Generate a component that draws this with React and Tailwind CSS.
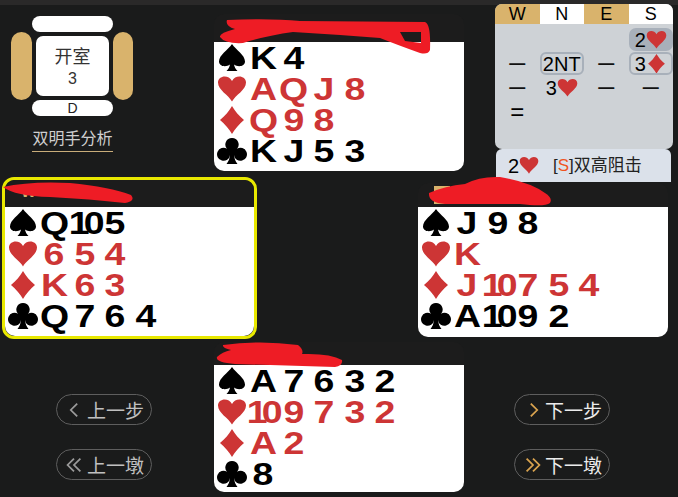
const RED = 'text-[#cd3535]'

const SUIT_PATHS = {
  '♠': 'M15 0C19 6 28 11 28 17.5C28 22.5 21 23.5 17 20.5C17.5 23 18.5 25 20.5 27L9.5 27C11.5 25 12.5 23 13 20.5C9 23.5 2 22.5 2 17.5C2 11 11 6 15 0Z',
  '♥': 'M15 26.5C11.5 20 1 15 1 7.5C1 .5 11.5-1 15 6C18.5-1 29 .5 29 7.5C29 15 18.5 20 15 26.5Z',
  '♦': 'M15 0C18 5 22 10 27 14C22 18 18 23 15 28C12 23 8 18 3 14C8 10 12 5 15 0Z',
  '♣': 'M15 1A6.5 6.5 0 0 1 20 11.8A6.5 6.5 0 1 1 17 18C17.3 21.5 18.5 24.5 20.5 27L9.5 27C11.5 24.5 12.7 21.5 13 18A6.5 6.5 0 1 1 10 11.8A6.5 6.5 0 0 1 15 1Z',
}

function SuitIcon({ s, size = 30 }) {
  const red = s === '♥' || s === '♦'
  return (
    <svg width={size} height={size * 28 / 30} viewBox="0 0 30 28" fill={red ? '#cd3535' : '#000'} className="shrink-0">
      <path d={SUIT_PATHS[s]} />
    </svg>
  )
}

function Card({ v }) {
  return (
    <span className="w-[30.5px] shrink-0 text-center">
      <span className={`inline-block scale-x-[1.17] ${v === '10' ? 'pr-[2px] tracking-[-5px]' : ''}`}>{v}</span>
    </span>
  )
}

function HandRow({ s, cards }) {
  const red = s === '♥' || s === '♦'
  return (
    <div className={`flex h-[31px] items-center font-['Liberation_Sans'] text-[32px] leading-none font-bold ${red ? RED : 'text-black'}`}>
      <span className="flex w-[34px] shrink-0 justify-center pl-[1px]">
        <SuitIcon s={s} />
      </span>
      {cards.map((c, i) => <Card key={i} v={c} />)}
    </div>
  )
}

function Hand({ rows, head, tag, className }) {
  return (
    <div className={`flex flex-col overflow-hidden rounded-[10px] bg-[#1c1c1c] ${className}`}>
      <div className={`shrink-0 ${head} flex items-end pb-[3px] pl-4 font-['Liberation_Sans'] text-[11px] text-white`}>{tag}</div>
      <div className="flex-1 bg-white">
        {rows.map(r => <HandRow key={r[0]} s={r[0]} cards={r[1]} />)}
      </div>
    </div>
  )
}

const NORTH = [['♠', ['K', '4']], ['♥', ['A', 'Q', 'J', '8']], ['♦', ['Q', '9', '8']], ['♣', ['K', 'J', '5', '3']]]
const WEST = [['♠', ['Q', '10', '5']], ['♥', ['6', '5', '4']], ['♦', ['K', '6', '3']], ['♣', ['Q', '7', '6', '4']]]
const EAST = [['♠', ['J', '9', '8']], ['♥', ['K']], ['♦', ['J', '10', '7', '5', '4']], ['♣', ['A', '10', '9', '2']]]
const SOUTH = [['♠', ['A', '7', '6', '3', '2']], ['♥', ['10', '9', '7', '3', '2']], ['♦', ['A', '2']], ['♣', ['8']]]

function Compass() {
  return (
    <div className="flex w-[122px] flex-col items-start pt-[11px] pl-[11px]">
      <div className="ml-[21px] h-[16px] w-[81px] rounded-[8px] bg-white" />
      <div className="flex h-[68px] items-stretch">
        <div className="w-[21px] rounded-full bg-[#d9b36c]" />
        <div className="flex w-[81px] items-center justify-center">
          <div className="flex h-[60px] w-[73px] flex-col items-center justify-center rounded-[7px] bg-white font-['Noto_Sans_CJK_SC'] text-[18px] leading-[26px] text-[#333]">
            <span>开室</span>
            <span className="font-['Liberation_Sans'] text-[16px] leading-[22px]">3</span>
          </div>
        </div>
        <div className="w-[20px] rounded-full bg-[#d9b36c]" />
      </div>
      <div className="ml-[21px] flex h-[16px] w-[81px] items-center justify-center rounded-[8px] bg-white font-['Liberation_Sans'] text-[14px] leading-none text-[#222]">D</div>
      <div className="mt-[11px] ml-[21px] w-[81px] border-b border-[#c9ad7a] pb-[3px] text-center font-['Noto_Sans_CJK_SC'] text-[16px] leading-[21px] whitespace-nowrap text-[#cfcfcf]">
        双明手分析
      </div>
    </div>
  )
}

function Bid({ t, s, mode }) {
  const box = mode === 'on' ? 'bg-[#a8b0ba] rounded-[7px]' : mode === 'ring' ? 'border-2 border-[#a8b0ba] rounded-[6px]' : ''
  return (
    <div className={`flex h-[23px] items-center justify-center whitespace-nowrap ${box}`}>
      {t}
      {s && <SuitIcon s={s} size={21} />}
    </div>
  )
}

function Bidding() {
  const Dash = () => <div className="flex h-[23px] items-center justify-center text-[16px] leading-none font-bold text-[#111]">—</div>
  return (
    <div className="flex w-[178px] flex-col pt-[4px] font-['Liberation_Sans'] text-[20px] leading-none text-black">
      <div className="h-[145px] overflow-hidden rounded-[7px] bg-[#ced2d6]">
        <div className="grid h-[19px] grid-cols-4 text-center text-[18px] leading-[20px]">
          <div className="bg-[#d9b36c]">W</div>
          <div className="bg-white">N</div>
          <div className="bg-[#d9b36c]">E</div>
          <div className="bg-white">S</div>
        </div>
        <div className="mt-[5px] grid grid-cols-4 gap-y-[1px]">
          <div /><div /><div />
          <Bid t="2" s="♥" mode="on" />
          <Dash />
          <Bid t="2NT" mode="ring" />
          <Dash />
          <Bid t="3" s="♦" mode="ring" />
          <Dash />
          <Bid t="3" s="♥" />
          <Dash />
          <Dash />
          <div className="flex h-[23px] items-center justify-center text-[24px] leading-none">=</div>
        </div>
      </div>
      <div className="ml-[1px] flex h-[33px] w-[175px] items-center rounded-t-[6px] bg-[#dbe1ea] pl-[12px]">
        <span className="flex w-[45px] items-center whitespace-nowrap">2<SuitIcon s="♥" size={20} /></span>
        <span className="font-['Liberation_Sans','Noto_Sans_CJK_SC',sans-serif] text-[17px] whitespace-nowrap text-[#222]">
          [<span className="text-[#f0531f]">S</span>]双高阻击
        </span>
      </div>
    </div>
  )
}

function Chevron({ dir, double, gold }) {
  const pts = dir === 'left' ? 'M11 2 L3 10 L11 18' : 'M3 2 L11 10 L3 18'
  const pts2 = dir === 'left' ? 'M19 2 L11 10 L19 18' : 'M11 2 L19 10 L11 18'
  return (
    <svg width={double ? 20 : 14} height="16" viewBox={double ? '0 0 22 20' : '0 0 14 20'} fill="none" stroke={gold ? '#d9a34f' : '#9a9a9a'} strokeWidth="2.2" className="shrink-0">
      <path d={pts} />
      {double && <path d={pts2} />}
    </svg>
  )
}

function StepBtn({ label, dir, double, gold, className }) {
  return (
    <div className={`flex h-[31px] w-[96px] items-center rounded-full border border-[#5e5e5e] font-['Noto_Sans_CJK_SC'] text-[19px] leading-none whitespace-nowrap ${gold ? 'text-[#ececec]' : 'text-[#c0c0c0]'} ${className}`}>
      <Chevron dir={dir} double={double} gold={gold} />
      <span>{label}</span>
    </div>
  )
}

function Scribbles() {
  return (
    <svg className="pointer-events-none absolute inset-0" width="678" height="497" fill="#ee1c25">
      <path fillRule="evenodd" d="M227 20 Q270 18 300 21 L425 22 Q431 24 430 50 Q428 55 420 53 Q395 44 380 38 L340 35 L293 32 Q265 36 243 43 Q225 44 220 37 Q219 33 235 29 Q225 26 227 20 Z M400 32 L421 32 L421 43 L405 41 Z" />
      <path d="M3 187 Q30 181 70 183 Q110 187 131 195 Q136 201 125 203 Q90 199 50 197 Q15 196 3 187 Z" />
      <path d="M429 193 Q445 186 465 184 Q480 176 500 177 Q530 182 545 193 Q553 198 550 203 Q545 207 520 204 L445 204 Q428 203 429 193 Z" />
      <path d="M223 345 Q260 340 298 345 Q304 350 302 354 Q330 353 342 360 Q343 366 335 367 L235 364 Q215 362 217 357 Q222 352 231 350 Q222 348 223 345 Z" />
    </svg>
  )
}

export default function App() {
  return (
    <div className="relative h-[497px] w-[678px] overflow-hidden bg-[#1a1b1b]">
      <div className="flex h-[177px] border-t-[5px] border-[#2a2929]">
        <Compass />
        <div className="mt-[9px] ml-[92px] w-[250px]">
          <Hand rows={NORTH} head="h-[28px]" className="h-[157px]" />
        </div>
        <div className="-mt-[5px] ml-[31px]">
          <Bidding />
        </div>
      </div>

      <div className="flex items-start pl-[2px]">
        <div className="h-[162px] w-[255px] rounded-[12px] border-[3px] border-[#e8e800]">
          <Hand rows={WEST} head="h-[27px]" tag={<span className="text-[16px] font-bold text-[#d9b36c]">W</span>} className="h-full" />
        </div>
        <div className="mt-[6px] ml-[161px] w-[250px]">
          <Hand rows={EAST} head="h-[24px]" tag={<span className="h-[18px] w-[16px] bg-[#d9b36c]" />} className="h-[154px]" />
        </div>
      </div>

      <div className="mt-[3px] flex">
        <div className="flex w-[214px] flex-col items-start gap-[24px] pt-[52px] pl-[56px]">
          <StepBtn label="上一步" dir="left" className="gap-[6px] pl-[10px]" />
          <StepBtn label="上一墩" dir="left" double className="gap-[3px] pl-[7px]" />
        </div>
        <div className="w-[250px]">
          <Hand rows={SOUTH} head="h-[23px]" className="h-[150px]" />
        </div>
        <div className="flex flex-col items-start gap-[24px] pt-[52px] pl-[50px]">
          <StepBtn label="下一步" dir="right" gold className="gap-[4px] pl-[12px]" />
          <StepBtn label="下一墩" dir="right" double gold className="gap-[2px] pl-[8px]" />
        </div>
      </div>

      <Scribbles />
    </div>
  )
}
